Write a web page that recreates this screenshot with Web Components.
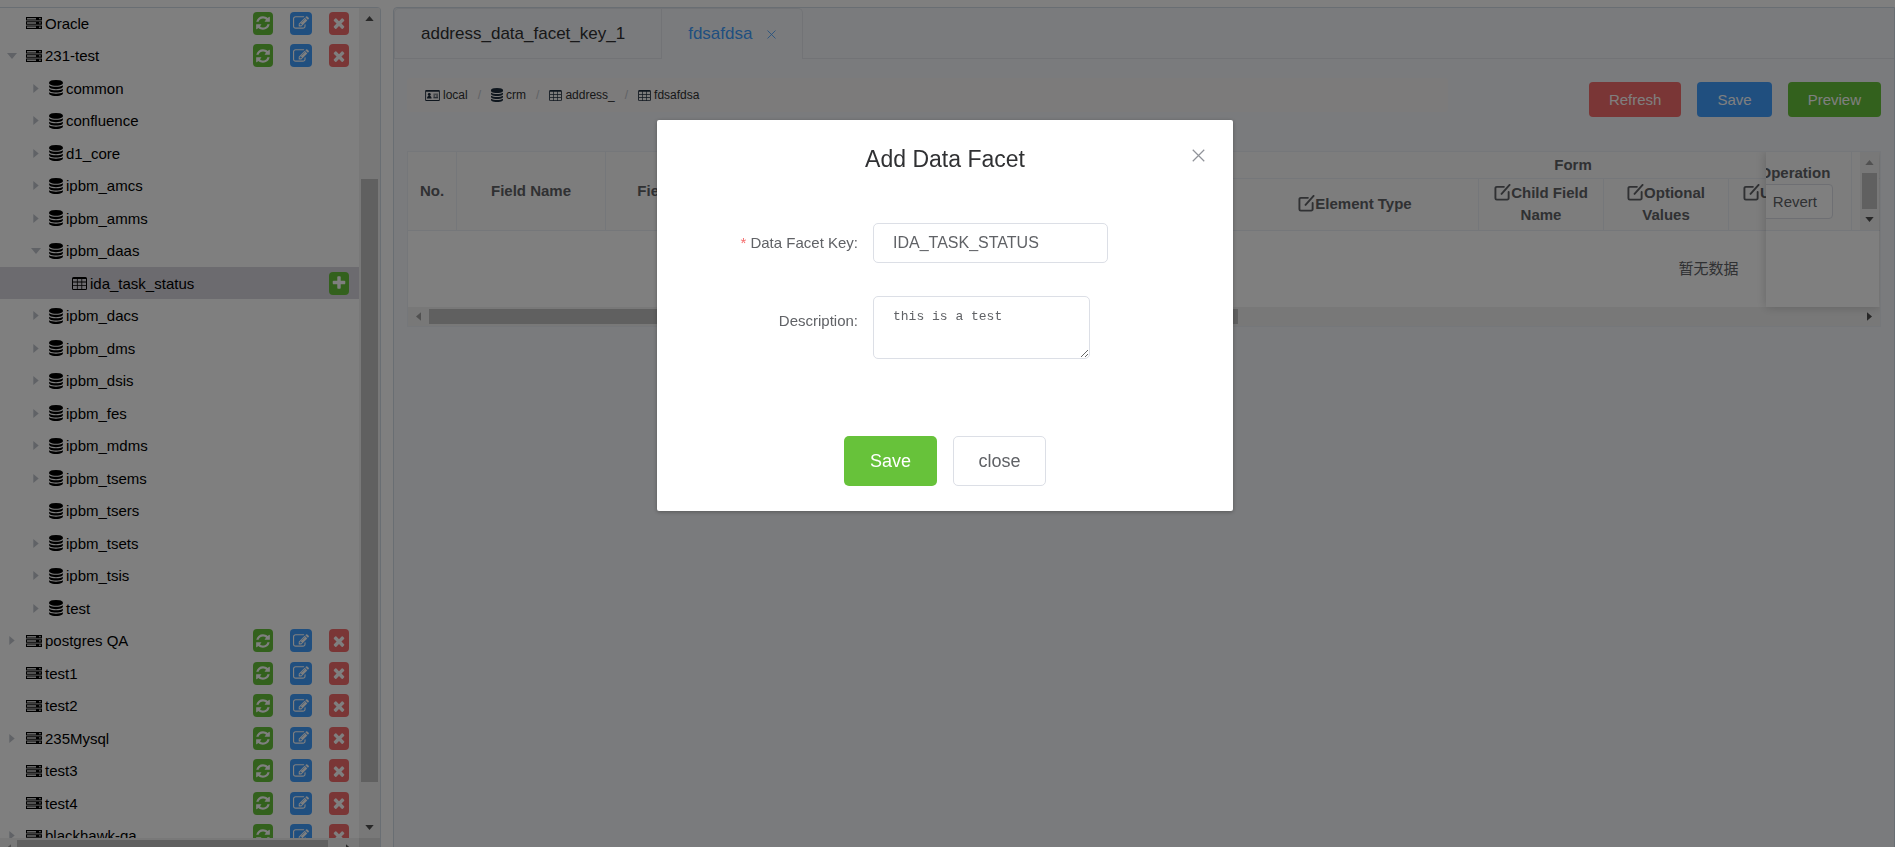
<!DOCTYPE html>
<html lang="en">
<head>
<meta charset="utf-8">
<title>Data Facet Manager</title>
<style>
html, body { margin: 0; height: 100%; }
body { overflow: hidden; background: #fff; font-family: "Liberation Sans", Arial, "Noto Sans CJK SC", sans-serif; font-size: 15px; color: #303133; }
</style>
</head>
<body>
<facet-app></facet-app>
<script>
const ICONS = {
  refresh: ['0 0 1792 1792', '<path d="M1639 1056q0 5-1 7-64 268-268 434.500t-478 166.500q-146 0-282.500-55t-243.500-157l-129 129q-19 19-45 19t-45-19-19-45v-448q0-26 19-45t45-19h448q26 0 45 19t19 45-19 45l-137 137q71 66 161 102t187 36q134 0 250-65t186-179q11-17 53-117 8-23 30-23h192q13 0 22.500 9.500t9.500 22.500zm25-800v448q0 26-19 45t-45 19h-448q-26 0-45-19t-19-45 19-45l138-138q-148-137-349-137-134 0-250 65t-186 179q-11 17-53 117-8 23-30 23h-199q-13 0-22.500-9.500t-9.500-22.500v-7q65-268 270-434.500t480-166.500q146 0 284 55.500t245 156.500l130-129q19-19 45-19t45 19 19 45z"/>'],
  edit: ['0 0 1792 1792', '<path d="M888 1184l116-116-152-152-116 116v56h96v96h56zm440-720q-16-16-33 1l-350 350q-17 17-1 33t33-1l350-350q17-17 1-33zm80 594v190q0 119-84.500 203.500t-203.500 84.500h-832q-119 0-203.500-84.500t-84.500-203.500v-832q0-119 84.500-203.500t203.500-84.500h832q63 0 117 25 15 7 18 23 3 17-9 29l-49 49q-14 14-32 8-23-6-45-6h-832q-66 0-113 47t-47 113v832q0 66 47 113t113 47h832q66 0 113-47t47-113v-126q0-13 9-22l64-64q15-15 35-7t20 29zm-96-738l288 288-672 672h-288v-288zm444 132l-92 92-288-288 92-92q28-28 68-28t68 28l152 152q28 28 28 68t-28 68z"/>'],
  remove: ['0 0 1792 1792', '<path d="M1490 1322q0 40-28 68l-136 136q-28 28-68 28t-68-28l-294-294-294 294q-28 28-68 28t-68-28l-136-136q-28-28-28-68t28-68l294-294-294-294q-28-28-28-68t28-68l136-136q28-28 68-28t68 28l294 294 294-294q28-28 68-28t68 28l136 136q28 28 28 68t-28 68l-294 294 294 294q28 28 28 68z"/>'],
  plus: ['0 0 1792 1792', '<path d="M1600 736v192q0 40-28 68t-68 28h-416v416q0 40-28 68t-68 28h-192q-40 0-68-28t-28-68v-416h-416q-40 0-68-28t-28-68v-192q0-40 28-68t68-28h416v-416q0-40 28-68t68-28h192q40 0 68 28t28 68v416h416q40 0 68 28t28 68z"/>'],
  database: ['128 0 1536 1792', '<path d="M896 768q237 0 443-43t325-127v170q0 69-103 128t-280 93.500-385 34.500-385-34.500-280-93.500-103-128v-170q119 84 325 127t443 43zm0 768q237 0 443-43t325-127v170q0 69-103 128t-280 93.500-385 34.500-385-34.500-280-93.500-103-128v-170q119 84 325 127t443 43zm0-384q237 0 443-43t325-127v170q0 69-103 128t-280 93.500-385 34.500-385-34.500-280-93.500-103-128v-170q119 84 325 127t443 43zm0-1152q208 0 385 34.500t280 93.500 103 128v128q0 69-103 128t-280 93.500-385 34.500-385-34.500-280-93.500-103-128v-128q0-69 103-128t280-93.500 385-34.500z"/>'],
  server: ['0 0 16 14', '<path fill-rule="evenodd" d="M0 1h16v3.500H0zM1 2v1.500h9V2zM0 5.300h16v3.500H0zM1 6.300v1.500h9V6.300zM0 9.600h16v3.500H0zM1 10.600v1.500h9v-1.500zM13.300 2v1.300h1.300V2zM13.300 6.300v1.300h1.300V6.300zM13.300 10.600v1.300h1.300v-1.300z"/><path opacity=".2" d="M1 2h9v1.500H1zM1 6.300h9v1.500H1zM1 10.600h9v1.500H1z"/>'],
  table: ['0 0 15 13', '<path fill-rule="evenodd" d="M1.500 0h12A1.500 1.500 0 0 1 15 1.500v10a1.500 1.500 0 0 1-1.500 1.500h-12A1.500 1.500 0 0 1 0 11.500v-10A1.500 1.500 0 0 1 1.500 0zM1 2v2.600h3.900V2zM5.700 2v2.600h3.700V2zM10.200 2v2.600H14V2zM1 5.500v2.700h3.900V5.500zM5.700 5.500v2.700h3.700V5.500zM10.200 5.500v2.700H14V5.500zM1 9.100V12h3.900V9.100zM5.700 9.100V12h3.700V9.100zM10.200 9.100V12H14V9.100z"/>'],
  card: ['0 0 16 12', '<path fill-rule="evenodd" d="M1 0h14a1 1 0 0 1 1 1v10a1 1 0 0 1-1 1H1a1 1 0 0 1-1-1V1a1 1 0 0 1 1-1zM1 2v9h14V2z"/><circle cx="4.500" cy="5" r="1.600"/><path d="M2 9.300c0-2 1-2.900 2.500-2.900S7 7.300 7 9.300zM9 4h5v1H9zM9 6h2v1H9zM12 6h2v1h-2zM9 8h5v1H9z"/>'],
  compose: ['0 0 18 18', '<path d="M10.500 3H3a1.500 1.500 0 0 0-1.500 1.500V15A1.500 1.500 0 0 0 3 16.500h11a1.500 1.500 0 0 0 1.500-1.500V8.500M8 10.500 16.500 1" fill="none" stroke="currentColor" stroke-width="2" stroke-linecap="round"/>'],
  close: ['0 0 12 12', '<path d="M.7.7l10.600 10.600M11.300.7.7 11.300" fill="none" stroke="currentColor" stroke-width="1.100"/>'],
  down: ['0 0 10 6', '<path d="M0 0h10L5 6z"/>'],
  up: ['0 0 10 6', '<path d="M0 6h10L5 0z"/>'],
  right: ['0 0 6 10', '<path d="M0 0v10l6-5z"/>'],
  left: ['0 0 6 10', '<path d="M6 0v10L0 5z"/>']
};

class Base extends HTMLElement {
  constructor() { super(); this.attachShadow({ mode: 'open' }); }
  connectedCallback() { this.shadowRoot.innerHTML = `<style>*{box-sizing:border-box}${this.css()}</style>${this.html()}`; }
  css() { return ''; }
  html() { return '<slot></slot>'; }
}

customElements.define('ui-icon', class extends Base {
  css() { return ':host{display:inline-flex;flex:none;width:16px;height:16px}svg{width:100%;height:100%;fill:currentColor}'; }
  html() { const [box, body] = ICONS[this.getAttribute('name')]; return `<svg viewBox="${box}" aria-hidden="true">${body}</svg>`; }
});

customElements.define('ui-button', class extends Base {
  css() { return `
    :host{display:inline-block}
    button{display:block;height:35px;padding:0 19px;border:1px solid transparent;border-radius:4px;font:inherit;font-size:15px;color:#fff;background:#409eff;white-space:nowrap}
    :host([kind=danger]) button{background:#f56c6c}
    :host([kind=success]) button{background:#67c23a}
    :host([kind=plain]) button{background:#fff;border-color:#dcdfe6;color:#606266}
    :host([size=small]) button{padding:0 15px}
    :host([size=large]) button{height:50px;width:93px;padding:0;font-size:18px;border-radius:5px}`; }
  html() { return '<button type="button"><slot></slot></button>'; }
});

customElements.define('scroll-bar', class extends Base {
  css() { return `
    :host{display:flex;align-items:center;background:#f1f1f1;color:#505050;--from:0%;--size:50%;--start:21px}
    :host([dir=v]){flex-direction:column}
    .end{flex:none;display:flex;align-items:center;justify-content:center;width:21px;height:21px}
    :host([dir=h]) .end:first-of-type{width:var(--start)}
    ui-icon{width:9px;height:5px}
    :host([dir=h]) ui-icon{width:5px;height:9px}
    .off{color:#a3a3a3}
    .track{flex:1;display:flex;align-self:stretch;min-width:0;min-height:0}
    :host([dir=v]) .track{flex-direction:column;padding:0 2px}
    :host([dir=h]) .track{padding:2px 0}
    .before{flex:0 0 var(--from)}
    .thumb{flex:0 0 var(--size);background:#c1c1c1}`; }
  html() {
    const v = this.getAttribute('dir') === 'v', off = this.hasAttribute('start') ? 'off' : '';
    return `<span class="end ${off}"><ui-icon name="${v ? 'up' : 'left'}"></ui-icon></span><div class="track"><div class="before"></div><div class="thumb"></div></div><span class="end"><ui-icon name="${v ? 'down' : 'right'}"></ui-icon></span>`;
  }
});

customElements.define('tree-row', class extends Base {
  css() { return `
    :host{display:flex;align-items:center;height:32px;padding:0 10px 0 0;color:#000;white-space:nowrap}
    :host(:nth-child(even)){height:33px}
    :host([selected]){background:#d9d6de}
    .caret{flex:none;display:flex;justify-content:center;width:26px;color:#c0c4cc}
    .caret ui-icon{width:6px;height:9px}
    .caret ui-icon[name=down]{width:10px;height:6px}
    :host([level="1"]) .caret{padding-right:2px}
    :host([level="2"]){padding-left:23px}
    :host([level="3"]){padding-left:46px}
    .kind{width:16px;height:14px;margin-right:3px}
    .kind[name=database]{width:14px;height:16px}
    .kind[name=table]{width:15px;height:13px}
    .name{flex:1}
    .actions{display:flex;gap:17px}
    button{display:flex;align-items:center;justify-content:center;width:20px;height:23px;padding:0;border:0;border-radius:4px;color:#fff;background:#67c23a}
    button.edit{width:22px;background:#409eff}
    button.remove{background:#f56c6c}`; }
  html() {
    const level = this.getAttribute('level'), caret = this.getAttribute('caret');
    const kind = { 1: 'server', 2: 'database', 3: 'table' }[level];
    const btn = (n, label) => `<button type="button" class="${n}" aria-label="${label}"><ui-icon name="${n}"></ui-icon></button>`;
    const actions = level === '1' ? btn('refresh', 'Refresh') + btn('edit', 'Edit') + btn('remove', 'Delete') : level === '3' ? btn('plus', 'Add') : '';
    return `<span class="caret">${caret ? `<ui-icon name="${caret}"></ui-icon>` : ''}</span><ui-icon class="kind" name="${kind}"></ui-icon><span class="name"><slot></slot></span><div class="actions">${actions}</div>`;
  }
});

customElements.define('source-tree', class extends Base {
  css() { return `
    :host{display:grid;grid-template:minmax(0,1fr) 20px/minmax(0,1fr) 21px;height:calc(100vh + 4px);border-right:1px solid #d3dce6;border-radius:0 4px 0 0;overflow:hidden;background:#fff;box-shadow:inset 0 1px #d3dce6}
    nav{overflow:hidden}
    .v{--from:19%;--size:76.5%;margin-top:1px}
    .h{--size:97%;--start:17px}
    .corner{background:#dcdcdc}`; }
  html() {
    const rows = [[1, 'Oracle'], [1, '231-test', 'down']];
    for (const n of ['common', 'confluence', 'd1_core', 'ipbm_amcs', 'ipbm_amms']) rows.push([2, n, 'right']);
    rows.push([2, 'ipbm_daas', 'down'], [3, 'ida_task_status']);
    for (const n of ['ipbm_dacs', 'ipbm_dms', 'ipbm_dsis', 'ipbm_fes', 'ipbm_mdms', 'ipbm_tsems']) rows.push([2, n, 'right']);
    rows.push([2, 'ipbm_tsers'], [2, 'ipbm_tsets', 'right'], [2, 'ipbm_tsis', 'right'], [2, 'test', 'right'],
      [1, 'postgres QA', 'right'], [1, 'test1'], [1, 'test2'], [1, '235Mysql', 'right'], [1, 'test3'], [1, 'test4'], [1, 'blackhawk-qa', 'right']);
    return `<nav aria-label="Data sources">${rows.map(([l, n, c]) => `<tree-row level="${l}" ${c ? `caret="${c}"` : ''} ${l === 3 ? 'selected' : ''}>${n}</tree-row>`).join('')}</nav>
      <scroll-bar class="v" dir="v"></scroll-bar><scroll-bar class="h" dir="h" start></scroll-bar><div class="corner"></div>`;
  }
});

customElements.define('tab-strip', class extends Base {
  css() { return `
    :host{display:flex;height:51px;border-bottom:1px solid #e4e7ed;font-size:17px}
    .tab{display:flex;align-items:center;gap:15px;height:51px;padding:0 36px 0 26px;border:1px solid #e4e7ed;border-width:1px 1px 0;border-top-left-radius:5px;color:#303133;text-decoration:none}
    .tab.on{color:#409eff;padding:0 26px;border-left:0;border-radius:0 5px 0 0;background:#f5f7fa}
    ui-icon{width:9px;height:9px}`; }
  html() { return `<a class="tab" href="#one">address_data_facet_key_1</a><a class="tab on" href="#two">fdsafdsa<ui-icon name="close"></ui-icon></a>`; }
});

customElements.define('crumb-bar', class extends Base {
  css() { return `
    :host{display:flex;align-items:center;height:34px;padding:0 18px;gap:10px;border-radius:4px;background:#f9f7f6;font-size:12px}
    a{display:flex;align-items:center;gap:3px;color:#303133;text-decoration:none}
    i{color:#c0c4cc;font-style:normal}
    ui-icon{width:12px;height:14px;color:#1f2d3d}
    ui-icon[name=table]{width:13px;height:11px}
    ui-icon[name=card]{width:15px;height:11px}`; }
  html() {
    return [['card', 'local'], ['database', 'crm'], ['table', 'address_'], ['table', 'fdsafdsa']]
      .map(([i, t]) => `<a href="#${t}"><ui-icon name="${i}"></ui-icon>${t}</a>`).join('<i>/</i>');
  }
});

customElements.define('facet-table', class extends Base {
  css() { return `
    :host{display:block;position:relative;overflow:hidden;border:1px solid #ebeef5;background:#fff;color:#606266}
    .view{overflow:hidden}
    table{table-layout:fixed;width:2601px;border-collapse:separate;border-spacing:0}
    th{padding:0;border:1px solid #ebeef5;border-width:0 1px 1px 0;background:#fafafa;font-size:15px;line-height:22px;font-weight:bold;color:#606266}
    .r1 th{height:27px}
    .r2 th{height:52px;vertical-align:top;padding-top:3px}
    .r2 th.mid{vertical-align:middle;padding:0 0 2px}
    .r2 th.first{text-align:left;padding:3px 0 0 14px}
    th ui-icon{width:17px;height:17px;vertical-align:-3px}
    td{height:76px;padding:0;text-align:center;font-size:15px;line-height:22px}
    .fixed{position:absolute;top:0;right:1px;bottom:19px;width:113px;background:#fff;box-shadow:0 0 10px rgba(0,0,0,.2)}
    .head{display:flex;height:79px;border-bottom:1px solid #ebeef5;background:#fafafa}
    .cell{flex:1;min-width:0;display:flex;justify-content:flex-end;overflow:hidden;padding:10px 18px 0 0;border-right:1px solid #ebeef5}
    .stack{flex:none;display:flex;flex-direction:column;align-items:center}
    .stack b{font-size:15px;line-height:22px}
    .gap{width:8px}
    .head scroll-bar{width:19px;--size:100%}
    .foot{height:19px;--size:56.6%}`; }
  html() {
    const h = t => `<th scope="col"><ui-icon name="compose"></ui-icon>${t}</th>`;
    return `<div class="view"><table>
      <colgroup><col style="width:49px"><col style="width:149px"><col style="width:142px"><col style="width:484px"><col style="width:247px"><col style="width:125px"><col style="width:125px"><col style="width:186px"><col></colgroup>
      <thead><tr class="r1"><th rowspan="2" scope="col">No.</th><th rowspan="2" scope="col">Field Name</th><th rowspan="2" scope="col">Field Label</th><th rowspan="2"></th><th colspan="4" scope="colgroup">Form</th><th rowspan="2"></th></tr>
      <tr class="r2"><th class="mid" scope="col"><ui-icon name="compose"></ui-icon>Element Type</th>${h('Child Field Name')}${h('Optional Values')}<th class="first" scope="col"><ui-icon name="compose"></ui-icon>U</th></tr></thead>
      <tbody><tr><td colspan="9">暂无数据</td></tr></tbody></table></div>
      <scroll-bar class="foot" dir="h" start></scroll-bar>
      <div class="fixed"><div class="head"><div class="cell"><div class="stack"><b>Operation</b><ui-button kind="plain" size="small">Revert</ui-button></div></div><span class="gap"></span><scroll-bar dir="v" start></scroll-bar></div></div>`;
  }
});

customElements.define('facet-workspace', class extends Base {
  css() { return `
    :host{display:block;height:100vh;border:1px solid #d3dce6;border-radius:4px 0 0 0;background:#f5f7fa}
    .pane{padding:19px 13px 0}
    .bar{display:grid;grid-template-columns:minmax(0,1fr) auto;gap:141px;align-items:start;margin-bottom:34px}
    .tools{display:flex;gap:16px;padding-top:4px}`; }
  html() { return `<tab-strip></tab-strip><div class="pane"><div class="bar"><crumb-bar></crumb-bar><div class="tools"><ui-button kind="danger">Refresh</ui-button><ui-button>Save</ui-button><ui-button kind="success">Preview</ui-button></div></div><facet-table></facet-table></div>`; }
});

customElements.define('facet-dialog', class extends Base {
  css() { return `
    :host{position:fixed;inset:0;display:flex;justify-content:center;align-items:flex-start;padding:120px 5px 0 0;background:rgba(0,0,0,.5)}
    section{position:relative;width:576px;padding:24px 0 25px;border-radius:2px;background:#fff;box-shadow:0 1px 4px rgba(0,0,0,.3);display:flex;flex-direction:column;color:#606266}
    h2{margin:0;text-align:center;font-size:23px;line-height:30px;font-weight:normal;color:#303133}
    .x{position:absolute;top:27px;right:26px;padding:2px;border:0;background:none;color:#909399;display:flex}
    .x ui-icon{width:13px;height:13px}
    form{display:grid;grid-template-columns:201px 1fr;column-gap:15px;row-gap:33px;align-items:start;margin-top:49px}
    label{text-align:right;font-size:15px;line-height:40px}
    label[for=note]{line-height:50px}
    label em{color:#f56c6c;font-style:normal;margin-right:4px}
    input,textarea{display:block;border:1px solid #dcdfe6;border-radius:5px;padding:0 19px;color:#606266;background:#fff;outline:0}
    input{width:235px;height:40px;font:inherit;font-size:16px}
    textarea{width:217px;height:63px;padding:10px 19px;font:13px/20px "Liberation Mono","Courier New",monospace}
    footer{display:flex;justify-content:center;gap:16px;margin-top:77px}`; }
  html() { return `<section role="dialog" aria-labelledby="t"><h2 id="t">Add Data Facet</h2><button class="x" type="button" aria-label="Close"><ui-icon name="close"></ui-icon></button>
    <form><label for="key"><em>*</em>Data Facet Key:</label><input id="key" value="IDA_TASK_STATUS"><label for="note">Description:</label><textarea id="note">this is a test</textarea></form>
    <footer><ui-button kind="success" size="large">Save</ui-button><ui-button kind="plain" size="large">close</ui-button></footer></section>`; }
});

customElements.define('facet-app', class extends Base {
  css() { return `:host{display:grid;grid-template-columns:381px minmax(0,1fr);gap:12px;padding-top:7px}`; }
  html() { return `<source-tree></source-tree><facet-workspace></facet-workspace><facet-dialog></facet-dialog>`; }
});
</script>
</body>
</html>
